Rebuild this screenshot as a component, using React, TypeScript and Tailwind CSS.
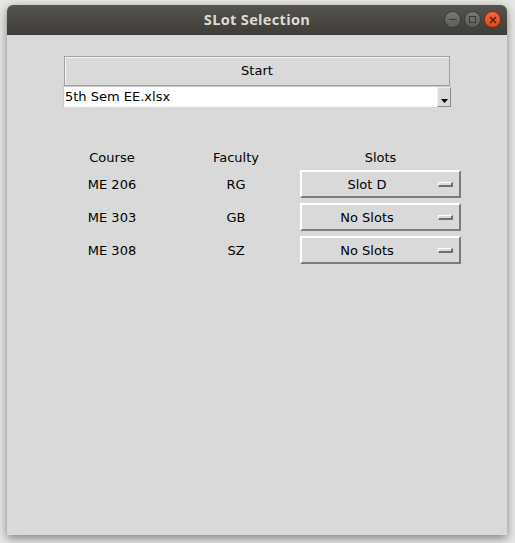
import { useState } from "react"

const rows = [
  { course: "ME 206", faculty: "RG", slot: "Slot D" },
  { course: "ME 303", faculty: "GB", slot: "No Slots" },
  { course: "ME 308", faculty: "SZ", slot: "No Slots" },
]

const OptionMenu = ({ value }: { value: string }) => (
  <div className="w-[161px] h-[28px] flex items-center bg-[#d9d9d9] border-2 border-t-white border-l-white border-b-[#7b7b7b] border-r-[#7b7b7b]">
    <span className="flex-1 text-center pr-[6px] pt-[2px]">{value}</span>
    <span className="w-[15px] h-[5px] mr-[6px] border border-t-white border-l-white border-b-[#6f6f6f] border-r-[#6f6f6f] border-b-2 border-r-2 box-border" />
  </div>
)

const App = () => {
  const [file] = useState("5th Sem EE.xlsx")

  return (
    <div className="w-[515px] h-[543px] bg-[#e6e6e5] pt-[5px] pl-[7px]" style={{ fontFamily: "'DejaVu Sans', sans-serif" }}>
      <div className="w-[500px] h-[530px] flex flex-col rounded-t-[6px] overflow-hidden shadow-[0_3px_10px_rgba(0,0,0,0.45)]">
        {/* title bar */}
        <div className="h-[30px] relative flex items-center justify-center bg-gradient-to-b from-[#57544e] to-[#3d3c38]">
          <span className="text-[14.6px] font-bold text-[#dfdbd2] tracking-[0.3px]" style={{ fontFamily: "'Open Sans', 'DejaVu Sans', sans-serif" }}>SLot Selection</span>
          <div className="absolute right-[6px] top-[6px] flex gap-[3px]">
            <div className="w-[17px] h-[17px] rounded-full bg-gradient-to-b from-[#7a7873] to-[#5e5c57] border border-[#3a3935] flex items-center justify-center">
              <div className="w-[8px] h-[1.5px] bg-[#3a3935]" />
            </div>
            <div className="w-[17px] h-[17px] rounded-full bg-gradient-to-b from-[#7a7873] to-[#5e5c57] border border-[#3a3935] flex items-center justify-center">
              <div className="w-[7px] h-[7px] border border-[#3a3935]" />
            </div>
            <div className="w-[17px] h-[17px] rounded-full bg-gradient-to-b from-[#f26a3c] to-[#dc4a18] border border-[#7a2a10] flex items-center justify-center">
              <svg width="8" height="8" viewBox="0 0 8 8">
                <path d="M1 1L7 7M7 1L1 7" stroke="#5a1a05" strokeWidth="1.4" />
              </svg>
            </div>
          </div>
        </div>

        {/* content */}
        <div className="flex-1 bg-[#d9d9d9] text-[13px] text-black">
          <div className="ml-[57px] mt-[21px] w-[386px] h-[30px] flex items-center justify-center bg-[#d9d9d9] border border-[#a0a0a0] shadow-[inset_1px_1px_0_#f4f4f4]">
            Start
          </div>
          <div className="ml-[56px] w-[388px] h-[21px] flex bg-white border-l border-t border-[#c8c8c8]">
            <span className="flex-1 pl-[1px] leading-[20px]">{file}</span>
            <div className="w-[14px] h-[20px] mt-[0px] bg-[#d9d9d9] border-t border-l border-[#f0f0f0] border-r border-b border-r-[#8a8a8a] border-b-[#8a8a8a] flex items-end justify-center pb-[3px]">
              <svg width="7" height="4" viewBox="0 0 7 4">
                <path d="M0 0H7L3.5 4Z" fill="#000" />
              </svg>
            </div>
          </div>

          <div className="mt-[40px] flex h-[20px] items-center pt-[2px]">
            <div className="ml-[56px] w-[98px] text-center">Course</div>
            <div className="ml-[11px] w-[128px] text-center">Faculty</div>
            <div className="w-[161px] text-center">Slots</div>
          </div>
          <div className="mt-[3px] flex flex-col gap-[5px]">
            {rows.map((r, i) => (
              <div key={i} className="flex items-center h-[28px]">
                <div className="ml-[56px] w-[98px] text-center pt-[2px]">{r.course}</div>
                <div className="ml-[11px] w-[128px] text-center pt-[2px]">{r.faculty}</div>
                <OptionMenu value={r.slot} />
              </div>
            ))}
          </div>
        </div>
      </div>
    </div>
  )
}

export default App
